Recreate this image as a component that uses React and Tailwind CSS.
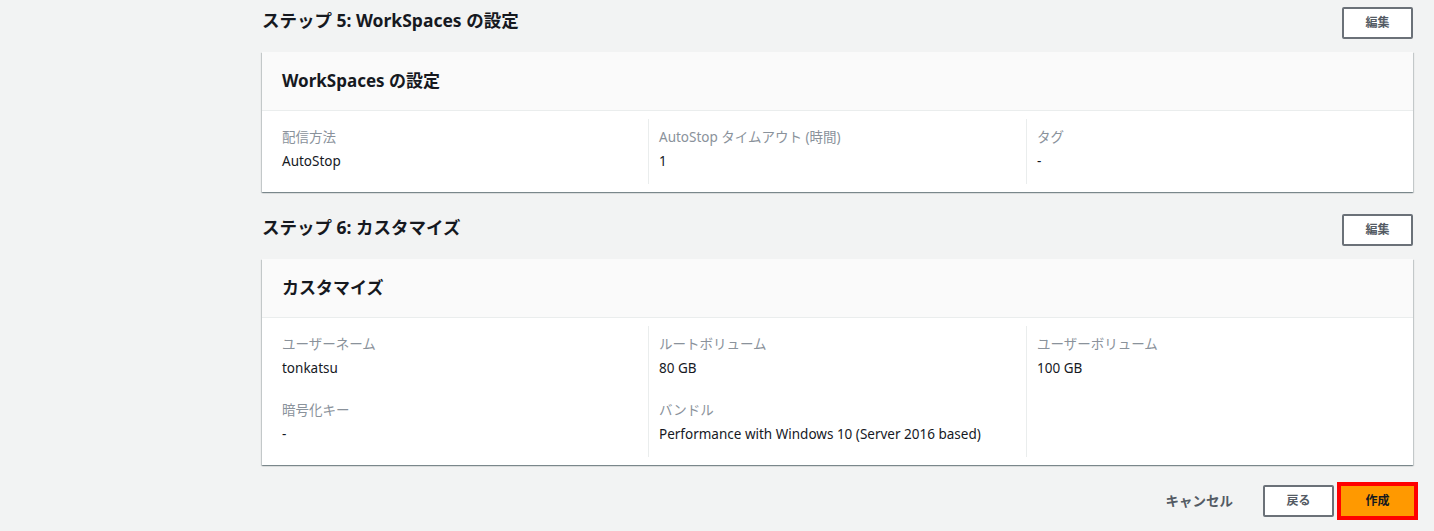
const FONT = { fontFamily: '"Noto Sans", "Noto Sans CJK JP", sans-serif' };

const sections = [
  {
    title: "ステップ 5: WorkSpaces の設定",
    card: "WorkSpaces の設定",
    columns: [
      [{ label: "配信方法", value: "AutoStop" }],
      [{ label: "AutoStop タイムアウト (時間)", value: "1" }],
      [{ label: "タグ", value: "-" }],
    ],
  },
  {
    title: "ステップ 6: カスタマイズ",
    card: "カスタマイズ",
    columns: [
      [
        { label: "ユーザーネーム", value: "tonkatsu" },
        { label: "暗号化キー", value: "-" },
      ],
      [
        { label: "ルートボリューム", value: "80 GB" },
        { label: "バンドル", value: "Performance with Windows 10 (Server 2016 based)" },
      ],
      [{ label: "ユーザーボリューム", value: "100 GB" }],
    ],
  },
];

function Field({ label, value }) {
  return (
    <div className="flex flex-col gap-[4px]">
      <div className="text-[13.5px] leading-[20px] text-[#8a929b]">{label}</div>
      <div className="text-[13.5px] leading-[20px] text-[#16191f]">{value}</div>
    </div>
  );
}

function Section({ section }) {
  return (
    <section>
      <div className="flex items-start justify-between mb-[13px]">
        <h2 className="text-[17.5px] leading-[26px] font-bold text-[#16191f]">
          {section.title}
        </h2>
        <button className="w-[71px] h-[32px] bg-white border-2 border-[#6b7178] rounded-[2px] text-[12px] font-bold text-[#545b64]">
          編集
        </button>
      </div>
      <div className="bg-white shadow-[0_1px_1px_0_rgba(0,28,36,0.3),1px_1px_1px_0_rgba(0,28,36,0.15),-1px_1px_1px_0_rgba(0,28,36,0.15)]">
        <div className="h-[59px] flex items-center px-5 bg-[#fafafa] border-b border-[#eaeded]">
          <h3 className="text-[17px] font-bold text-[#16191f]">{section.card}</h3>
        </div>
        <div className="grid grid-cols-[366px_378px_1fr] px-5 pt-2 pb-2">
          {section.columns.map((col, i) => (
            <div
              key={i}
              className={`flex flex-col gap-[22px] pt-2 pb-[13px] ${
                i > 0 ? "border-l border-[#eaeded] pl-[10px]" : ""
              }`}
            >
              {col.map((f) => (
                <Field key={f.label} {...f} />
              ))}
            </div>
          ))}
        </div>
      </div>
    </section>
  );
}

export default function App() {
  return (
    <div className="min-h-[531px] bg-[#f2f3f3]" style={FONT}>
      <div className="pl-[262px] pr-[21px] pt-[7px]">
        <div className="flex flex-col gap-[22px]">
          {sections.map((s) => (
            <Section key={s.title} section={s} />
          ))}
        </div>
        <div className="flex items-center justify-end mt-[20px] -mr-[1px]">
          <button className="text-[13.5px] font-bold text-[#545b64] mr-[30px]">
            キャンセル
          </button>
          <button className="w-[71px] h-[32px] bg-white border-2 border-[#6b7178] rounded-[2px] text-[12px] font-bold text-[#545b64]">
            戻る
          </button>
          <button className="ml-[7px] w-[73px] h-[30px] bg-[#ff9900] text-[12px] font-bold text-[#16191f] outline-[4px] outline-solid outline-[#ff0000]">
            作成
          </button>
        </div>
      </div>
    </div>
  );
}
